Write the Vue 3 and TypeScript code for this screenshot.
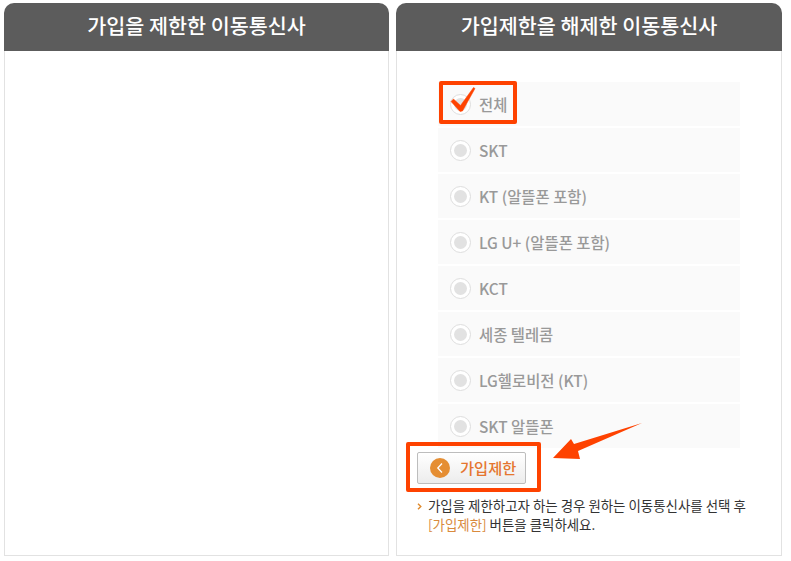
<script setup lang="ts">
const carriers: string[] = ['전체', 'SKT', 'KT (알뜰폰 포함)', 'LG U+ (알뜰폰 포함)', 'KCT', '세종 텔레콤', 'LG헬로비전 (KT)', 'SKT 알뜰폰']
</script>

<template>
  <div class="page">
    <section class="panel panel-left">
      <h2 class="head">가입을 제한한 이동통신사</h2>
      <div class="body"></div>
    </section>
    <section class="panel panel-right">
      <h2 class="head">가입제한을 해제한 이동통신사</h2>
      <div class="body right">
        <ul class="list">
          <li v-for="c in carriers" :key="c" class="row">
            <span class="radio"><span class="dot"></span></span>
            <span class="label">{{ c }}</span>
          </li>
        </ul>
        <button class="btn" type="button">
          <span class="circle">
            <svg width="8" height="12" viewBox="0 0 8 12"><path d="M6 1.5 L1.8 6 L6 10.5" fill="none" stroke="#fff" stroke-width="1.3" /></svg>
          </span>
          <span class="btn-text">가입제한</span>
        </button>
        <div class="note">
          <span class="chev">
            <svg width="5" height="7" viewBox="0 0 5 7"><path d="M1 .8 L3.8 3.5 L1 6.2" fill="none" stroke="#e08a2c" stroke-width="1.4" /></svg>
          </span>
          <p>가입을 제한하고자 하는 경우 원하는 이동통신사를 선택 후<br /><span class="link">[가입제한]</span> 버튼을 클릭하세요.</p>
        </div>
      </div>
    </section>

    <div class="box box-a"></div>
    <div class="box box-b"></div>
    <svg class="mark" width="791" height="561" viewBox="0 0 791 561">
      <path d="M451 101.5 L453.5 99 L460.5 105.5 L473.5 87.5 L475 88.5 L462.5 111 L460 111.5 Z" fill="#fe4200" stroke="#fe4200" stroke-width="0.5" stroke-linejoin="round" />
      <path d="M642 423 L574 444 L571 439 L553 458 L580 459 L578 451 Z" fill="#fe4200" />
    </svg>
  </div>
</template>

<style scoped>
.page {
  position: relative;
  width: 791px;
  height: 561px;
  box-sizing: border-box;
  padding: 3px 9px 5px 4px;
  display: flex;
  gap: 7px;
  background: #fff;
  font-family: "Noto Sans CJK KR", "Liberation Sans", sans-serif;
  overflow: hidden;
}
.panel {
  display: flex;
  flex-direction: column;
  min-width: 0;
}
.panel-left {
  flex: 0 0 385px;
}
.panel-right {
  flex: 1 1 0;
}
.head {
  margin: 0;
  height: 48px;
  line-height: 45px;
  text-align: center;
  background: #5c5c5c;
  color: #fff;
  font-size: 20.7px;
  font-weight: 500;
  border-radius: 10px 10px 0 0;
}
.body {
  flex: 1;
  border: 1px solid #e2e2e2;
  border-top: 0;
  background: #fff;
}
.right {
  padding: 31px 0 0 20px;
}
.list {
  list-style: none;
  margin: 0 0 4px 21px;
  padding: 0;
  width: 302px;
  display: flex;
  flex-direction: column;
  gap: 2px;
}
.row {
  height: 44px;
  background: #fafafa;
  display: flex;
  align-items: center;
  gap: 8px;
  padding-left: 12px;
  font-size: 15.4px;
  font-weight: 500;
  color: #999;
}
.label {
  margin-top: -1px;
}
.radio {
  width: 21px;
  height: 21px;
  box-sizing: border-box;
  border: 1px solid #dedede;
  border-radius: 50%;
  background: #fff;
  display: flex;
  align-items: center;
  justify-content: center;
}
.dot {
  width: 13px;
  height: 13px;
  border-radius: 50%;
  background: #e2e2e2;
}
.btn {
  width: 109px;
  height: 32px;
  box-sizing: border-box;
  padding: 0 0 0 12px;
  display: flex;
  align-items: center;
  gap: 10px;
  border: 1px solid #bdbdbd;
  border-radius: 2px;
  background: linear-gradient(#fff, #ececec);
  color: #e5762f;
  font-family: inherit;
  font-size: 15.3px;
  font-weight: 500;
}
.btn-text {
  margin-top: -2px;
}
.circle {
  width: 20px;
  height: 20px;
  border-radius: 50%;
  background: #e58e33;
  display: flex;
  align-items: center;
  justify-content: center;
}
.note {
  margin-top: 13px;
  display: flex;
  gap: 6px;
  font-size: 13.45px;
  line-height: 19px;
  color: #333;
}
.chev {
  line-height: 15px;
}
.note p {
  margin: -1px 0 0;
  white-space: nowrap;
}
.link {
  color: #d98a3d;
}
.box {
  position: absolute;
  box-sizing: border-box;
  border: 4px solid #fe4200;
  border-radius: 2px;
}
.box-a {
  left: 439px;
  top: 81px;
  width: 78px;
  height: 43px;
}
.box-b {
  left: 406px;
  top: 442px;
  width: 135px;
  height: 50px;
}
.mark {
  position: absolute;
  left: 0;
  top: 0;
  pointer-events: none;
}
</style>
